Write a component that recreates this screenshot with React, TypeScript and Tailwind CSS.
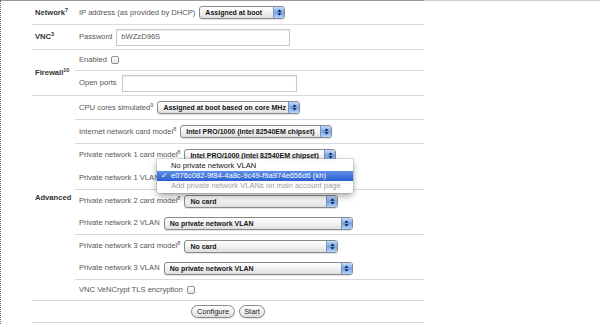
import type { ReactNode } from "react";

const line = "border-b border-[#dadada]";

function Arrows() {
  return (
    <svg width="5" height="7" viewBox="0 0 5 7">
      <path d="M2.5 0.5 L4.5 2.8 L0.5 2.8 Z" fill="#111" />
      <path d="M2.5 6.5 L4.5 4.2 L0.5 4.2 Z" fill="#111" />
    </svg>
  );
}

function Select({ className, children }: { className: string; children?: ReactNode }) {
  return (
    <div
      className={`flex h-[13px] shrink-0 overflow-hidden rounded-[3px] border border-[#8a8a8a] bg-gradient-to-b from-white via-[#f3f3f3] to-[#dedede] shadow-[0_1px_1px_rgba(0,0,0,0.12)] ${className}`}
    >
      <span className="flex-1 truncate pl-[5px] text-[7px] font-bold leading-[11px] text-[#151515]">
        {children}
      </span>
      <span className="flex w-[11px] items-center justify-center border-l border-[#7d93b8] bg-gradient-to-b from-[#c6dcf9] via-[#6fa5ee] to-[#b3d2f7]">
        <Arrows />
      </span>
    </div>
  );
}

function Checkbox() {
  return (
    <span className="inline-block h-[8px] w-[8px] shrink-0 rounded-[2px] border border-[#8f8f8f] bg-gradient-to-b from-white to-[#e6e6e6]" />
  );
}

function Input({ className, value }: { className: string; value?: string }) {
  return (
    <div
      className={`flex h-[17px] shrink-0 items-center border border-[#c9c9c9] bg-white pl-[4px] text-[#555] shadow-[inset_0_1px_1px_rgba(0,0,0,0.08)] ${className}`}
    >
      {value}
    </div>
  );
}

function Sup({ n }: { n: string }) {
  return <sup className="-top-[3px] text-[5.5px]">{n}</sup>;
}

function Section({
  label,
  sup,
  className,
  children,
}: {
  label?: string;
  sup?: string;
  className: string;
  children: ReactNode;
}) {
  return (
    <div className={`flex ${line} ${className}`}>
      <div className="flex w-[43px] shrink-0 items-center pl-[3px] font-bold text-[#333]">
        {label}
        {sup && <Sup n={sup} />}
      </div>
      <div className="flex flex-1 flex-col">{children}</div>
    </div>
  );
}

function Row({ className, children }: { className: string; children: ReactNode }) {
  return <div className={`flex items-center gap-[4px] pl-[4px] ${className}`}>{children}</div>;
}

export default function App() {
  return (
    <div className="relative h-[324px] w-[600px] overflow-hidden border-l border-dotted border-[#6d6d6d] bg-white font-['Liberation_Sans',Arial,sans-serif] text-[7.6px] text-[#555]">
      <div className="flex h-px">
        <div className="w-[423px] bg-[#9a9a9a]" />
        <div className="flex-1 bg-[#cfcfcf]" />
      </div>

      <div className="ml-[31px] w-[392px]">
        <Section label="Network" sup="7" className="h-[24px]">
          <Row className="h-full">
            <span>IP address (as provided by DHCP)</span>
            <Select className="w-[86px]">Assigned at boot</Select>
          </Row>
        </Section>

        <Section label="VNC" sup="3" className="h-[25px]">
          <Row className="h-full">
            <span>Password</span>
            <Input className="w-[174px]" value="bWZzD96S" />
          </Row>
        </Section>

        <Section label="Firewall" sup="10" className="h-[46px]">
          <Row className={`h-[21px] ${line}`}>
            <span>Enabled</span>
            <Checkbox />
          </Row>
          <Row className="h-[24px] gap-[5px]">
            <span>Open ports</span>
            <Input className="w-[175px]" />
          </Row>
        </Section>

        <Section label="Advanced" className="h-[205px]">
          <Row className={`h-[24px] ${line}`}>
            <span>
              CPU cores simulated
              <Sup n="9" />
            </span>
            <Select className="w-[143px]">Assigned at boot based on core MHz</Select>
          </Row>
          <Row className={`h-[24px] ${line}`}>
            <span>
              Internet network card model
              <Sup n="8" />
            </span>
            <Select className="w-[152px]">Intel PRO/1000 (Intel 82540EM chipset)</Select>
          </Row>
          <div className={`flex h-[46px] flex-col ${line}`}>
            <Row className="h-[22px]">
              <span>
                Private network 1 card model
                <Sup n="8" />
              </span>
              <Select className="w-[152px]">Intel PRO/1000 (Intel 82540EM chipset)</Select>
            </Row>
            <Row className="h-[23px]">
              <span>Private network 1 VLAN</span>
              {/* covered by the open menu below */}
              <Select className="w-[189px]" />
            </Row>
          </div>
          <div className={`flex h-[45px] flex-col ${line}`}>
            <Row className="h-[22px]">
              <span>
                Private network 2 card model
                <Sup n="8" />
              </span>
              <Select className="w-[154px]">No card</Select>
            </Row>
            <Row className="h-[22px]">
              <span>Private network 2 VLAN</span>
              <Select className="w-[189px]">No private network VLAN</Select>
            </Row>
          </div>
          <div className={`flex h-[45px] flex-col ${line}`}>
            <Row className="h-[22px]">
              <span>
                Private network 3 card model
                <Sup n="8" />
              </span>
              <Select className="w-[154px]">No card</Select>
            </Row>
            <Row className="h-[22px]">
              <span>Private network 3 VLAN</span>
              <Select className="w-[189px]">No private network VLAN</Select>
            </Row>
          </div>
          <Row className="h-[20px]">
            <span>VNC VeNCrypt TLS encryption</span>
            <Checkbox />
          </Row>
        </Section>

        <div className={`flex h-[22px] items-center justify-center gap-[4px] ${line}`}>
          <button className="h-[13px] w-[44px] rounded-full border border-[#8a8a8a] bg-gradient-to-b from-white via-[#f2f2f2] to-[#dcdcdc] text-[7.4px] leading-[11px] text-[#1a1a1a] shadow-[0_1px_1px_rgba(0,0,0,0.12)]">
            Configure
          </button>
          <button className="h-[13px] w-[26px] rounded-full border border-[#8a8a8a] bg-gradient-to-b from-white via-[#f2f2f2] to-[#dcdcdc] text-[7.4px] leading-[11px] text-[#1a1a1a] shadow-[0_1px_1px_rgba(0,0,0,0.12)]">
            Start
          </button>
        </div>
      </div>

      {/* open popup menu of the private network 1 VLAN select */}
      <div className="absolute left-[156px] top-[159px] w-[196px] rounded-b-[4px] bg-white/95 py-[2px] text-[7.6px] shadow-[0_3px_7px_rgba(0,0,0,0.35)] ring-1 ring-black/10">
        <div className="h-[10px] pl-[14px] leading-[10px] text-[#111]">No private network VLAN</div>
        <div className="flex h-[10px] items-center bg-gradient-to-b from-[#5d8fe6] to-[#2b5fd1] leading-[10px] text-white">
          <span className="w-[14px] pl-[4px]">✓</span>
          <span>e076c082-9f84-4a8c-9c49-f9a974e656d6 (kh)</span>
        </div>
        <div className="h-[10px] pl-[14px] leading-[10px] text-[#9d9d9d]">
          Add private network VLANs on main account page
        </div>
      </div>
    </div>
  );
}
